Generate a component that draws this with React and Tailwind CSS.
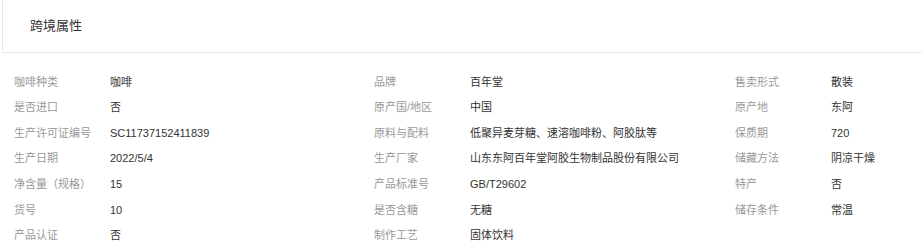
import React from "react";

const cols = [
  [
    ["咖啡种类", "咖啡"],
    ["是否进口", "否"],
    ["生产许可证编号", "SC11737152411839"],
    ["生产日期", "2022/5/4"],
    ["净含量（规格）", "15"],
    ["货号", "10"],
    ["产品认证", "否"],
  ],
  [
    ["品牌", "百年堂"],
    ["原产国/地区", "中国"],
    ["原料与配料", "低聚异麦芽糖、速溶咖啡粉、阿胶肽等"],
    ["生产厂家", "山东东阿百年堂阿胶生物制品股份有限公司"],
    ["产品标准号", "GB/T29602"],
    ["是否含糖", "无糖"],
    ["制作工艺", "固体饮料"],
  ],
  [
    ["售卖形式", "散装"],
    ["原产地", "东阿"],
    ["保质期", "720"],
    ["储藏方法", "阴凉干燥"],
    ["特产", "否"],
    ["储存条件", "常温"],
  ],
];

export default function App() {
  return (
    <div
      className="w-[922px] h-[248px] overflow-hidden bg-white"
      style={{ fontFamily: '"Liberation Sans", "Noto Sans CJK SC", sans-serif' }}
    >
      <div className="ml-[2px] mt-[-1px] w-[1100px] h-[54px] border border-[#e8e8e8] pl-[27px] flex items-center text-[13px] text-[#333]">
        跨境属性
      </div>
      <div className="mt-[16px] pl-[14px] grid grid-cols-[360px_361px_360px] w-[1100px]">
        {cols.map((col, ci) => (
          <div key={ci} className="flex flex-col">
            {col.map(([k, v]) => (
              <div key={k} className="flex h-[25.6px] items-center text-[11px] font-normal whitespace-nowrap">
                <div className="w-[96px] text-[#999]">{k}</div>
                <div className="text-[#333]">{v}</div>
              </div>
            ))}
          </div>
        ))}
      </div>
    </div>
  );
}
